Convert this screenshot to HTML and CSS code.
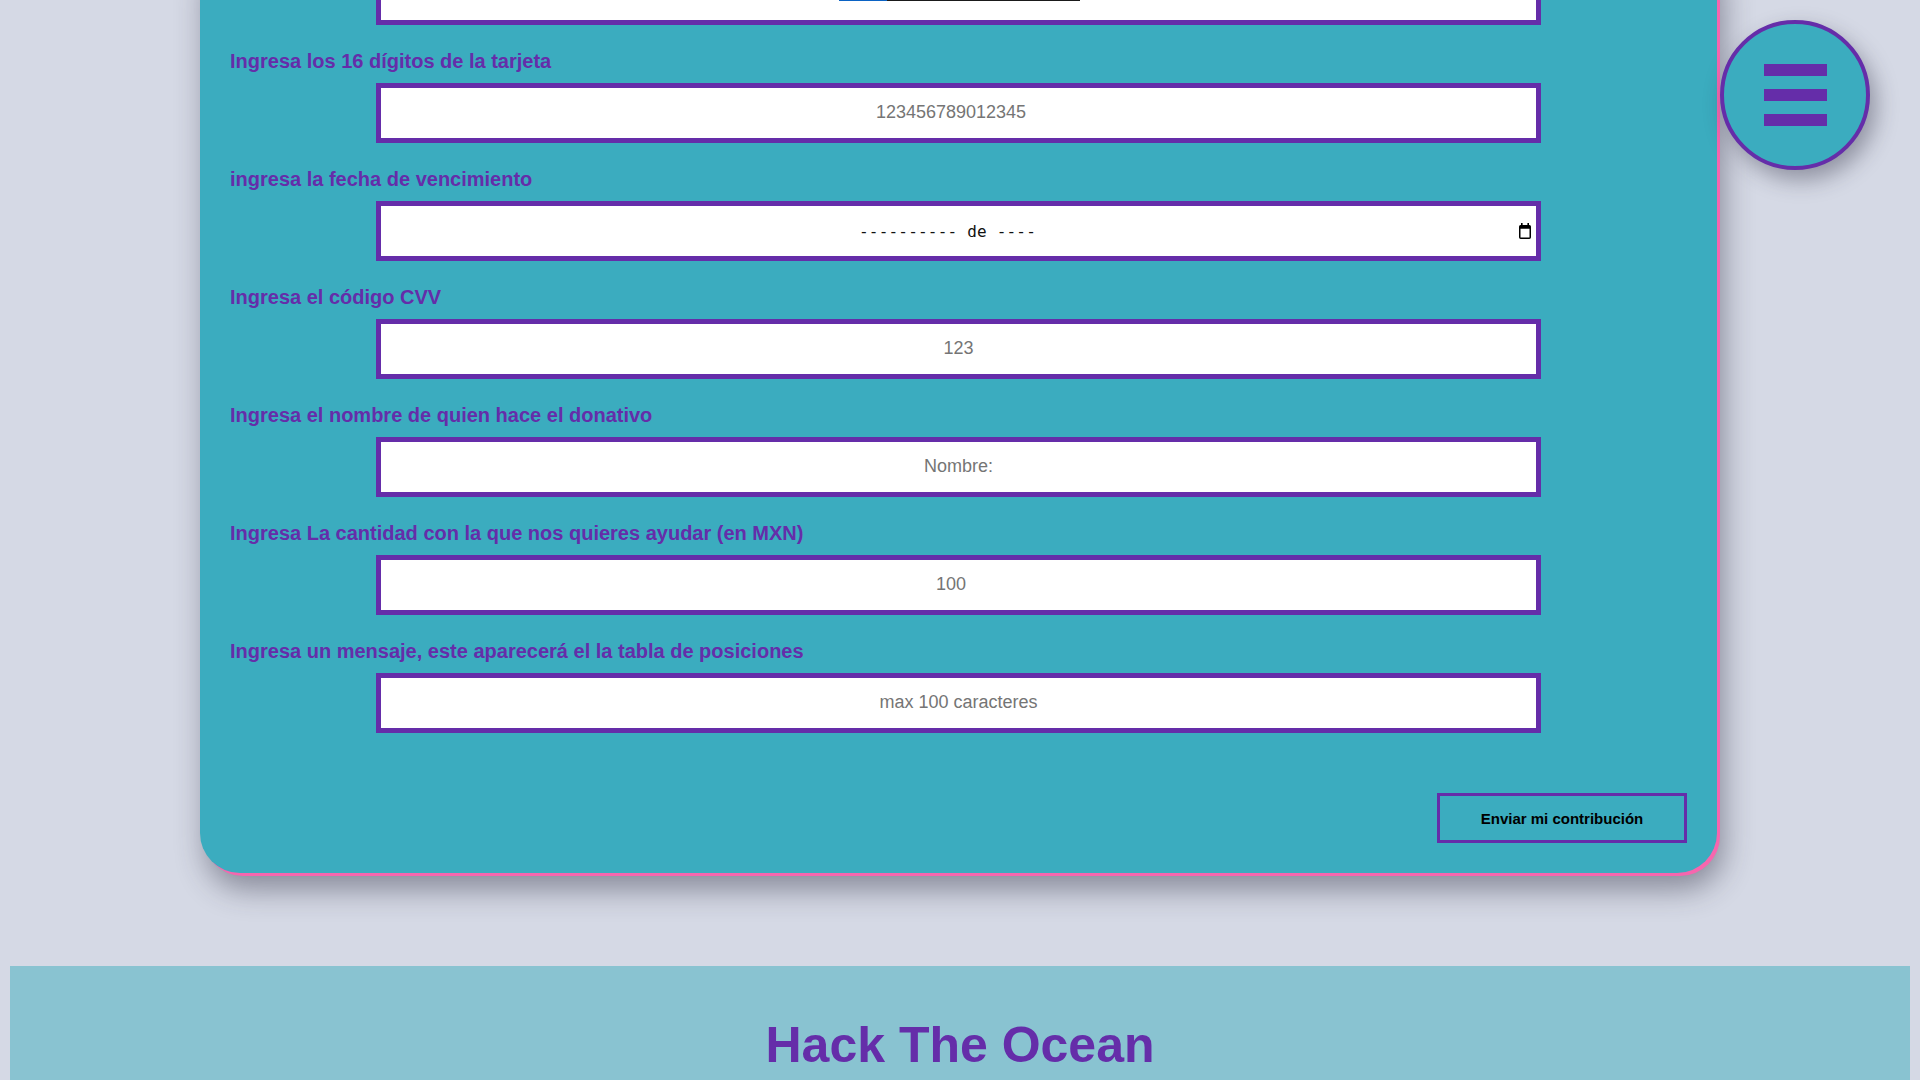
FILE: index.html
```html
<!DOCTYPE html>
<html lang="es">
<head>
<meta charset="utf-8">
<title>Hack The Ocean - Donativo</title>
<link rel="stylesheet" href="styles.css">
</head>
<body>
<nav class="menu-btn" aria-label="Menú">
  <span class="bar"></span>
  <span class="bar"></span>
  <span class="bar"></span>
</nav>

<main class="card">
  <div class="field cut">
    <div class="link-line"><span class="seg-blue"></span><span class="seg-black"></span></div>
  </div>

  <label class="lbl">Ingresa los 16 dígitos de la tarjeta</label>
  <input class="field txt" type="number" placeholder="123456789012345">

  <label class="lbl">ingresa la fecha de vencimiento</label>
  <div class="field date">
    <span class="date-text">---------- de ----</span>
    <svg class="cal" width="14" height="16" viewBox="0 0 14 16" aria-hidden="true">
      <rect x="3" y="0" width="1.6" height="3" fill="#000"/>
      <rect x="9.4" y="0" width="1.6" height="3" fill="#000"/>
      <rect x="1.75" y="2.75" width="10.5" height="12.5" rx="1" fill="none" stroke="#000" stroke-width="1.5"/>
      <rect x="1.75" y="2.75" width="10.5" height="3" fill="#000"/>
    </svg>
  </div>

  <label class="lbl">Ingresa el código CVV</label>
  <input class="field txt" type="text" placeholder="123">

  <label class="lbl">Ingresa el nombre de quien hace el donativo</label>
  <input class="field txt" type="text" placeholder="Nombre:">

  <label class="lbl">Ingresa La cantidad con la que nos quieres ayudar (en MXN)</label>
  <input class="field txt" type="number" placeholder="100">

  <label class="lbl">Ingresa un mensaje, este aparecerá el la tabla de posiciones</label>
  <input class="field txt" type="text" placeholder="max 100 caracteres">

  <div class="actions">
    <button class="send" type="button">Enviar mi contribución</button>
  </div>
</main>

<footer class="footer">
  <h1 class="brand">Hack The Ocean</h1>
</footer>
</body>
</html>
```

FILE: styles.css
```css
html, body {
  margin: 0;
  padding: 0;
}

body {
  background: #d5d9e5;
  font-family: "Liberation Sans", Arial, sans-serif;
  overflow: hidden;
}

.card {
  width: 1517px;
  box-sizing: border-box;
  margin: -60px 0 0 200px;
  padding: 25px 30px 30px;
  background: #3bacbf;
  border-radius: 40px;
  box-shadow: 3px 3px 0 #f766ae, 6px 16px 30px rgba(40, 40, 60, 0.45);
  display: flex;
  flex-direction: column;
  align-items: center;
}

.lbl {
  align-self: flex-start;
  margin: 25px 0 10px;
  font-size: 20px;
  line-height: 23px;
  font-weight: bold;
  color: #652da9;
}

.field {
  display: block;
  width: 1165px;
  height: 60px;
  box-sizing: border-box;
  border: 5px solid #652da9;
  background: #fff;
  padding: 0;
  margin: 0;
  font-family: "Liberation Sans", Arial, sans-serif;
  font-size: 18px;
  color: #333;
  text-align: center;
  outline: none;
}

.txt {
  padding-bottom: 2px;
}

.field::placeholder {
  color: #757575;
}

.cut {
  display: flex;
  justify-content: center;
  padding-top: 30px;
}

.link-line {
  display: flex;
  height: 1px;
  margin-left: 2px;
}

.seg-blue {
  width: 48px;
  background: #0b63c4;
}

.seg-black {
  width: 193px;
  background: #1a1a1a;
}

.date {
  display: flex;
  align-items: center;
  padding-right: 4px;
}

.date-text {
  flex: 1;
  text-align: center;
  font-family: "DejaVu Sans Mono", "Liberation Mono", monospace;
  font-size: 16px;
  color: #111;
  letter-spacing: 0.2px;
}

.cal {
  margin-left: 4px;
  display: block;
}

.actions {
  align-self: stretch;
  display: flex;
  justify-content: flex-end;
  margin-top: 60px;
}

.send {
  width: 250px;
  height: 50px;
  box-sizing: border-box;
  border: 3px solid #652da9;
  background: transparent;
  font-family: "Liberation Sans", Arial, sans-serif;
  font-size: 15px;
  font-weight: bold;
  color: #000;
  padding: 0;
}

.footer {
  width: 1900px;
  margin: 93px 0 0 10px;
  padding-top: 50px;
  height: 300px;
  box-sizing: border-box;
  background: #89c3d1;
}

.brand {
  margin: 0;
  font-size: 50px;
  font-weight: bold;
  color: #652da9;
  text-align: center;
}

.menu-btn {
  position: fixed;
  top: 20px;
  right: 50px;
  width: 150px;
  height: 150px;
  box-sizing: border-box;
  border-radius: 50%;
  border: 4px solid #652da9;
  background: #3bacbf;
  box-shadow: 6px 10px 22px rgba(40, 40, 60, 0.4);
  display: flex;
  flex-direction: column;
  align-items: center;
  justify-content: center;
  gap: 13px;
}

.bar {
  display: block;
  width: 63px;
  height: 12px;
  background: #652da9;
}
```
